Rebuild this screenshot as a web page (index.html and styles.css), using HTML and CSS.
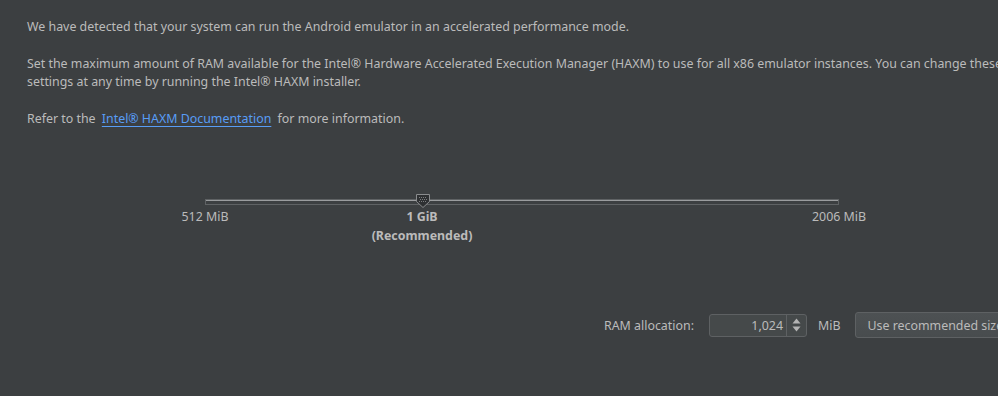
FILE: index.html
```html
<!DOCTYPE html>
<html>
<head>
<meta charset="utf-8">
<link rel="stylesheet" href="styles.css">
</head>
<body>
<div class="page">
  <div class="text">
    <p>We have detected that your system can run the Android emulator in an accelerated performance mode.</p>
    <p>Set the maximum amount of RAM available for the Intel® Hardware Accelerated Execution Manager (HAXM) to use for all x86 emulator instances. You can change these<br>settings at any time by running the Intel® HAXM installer.</p>
    <p>Refer to the <a class="link" href="#">Intel® HAXM Documentation</a> for more information.</p>
  </div>
  <div class="slider">
    <div class="track"></div>
    <div class="thumb">
      <svg width="14" height="14" viewBox="0 0 14 14">
        <path d="M0.5 0.5 H13.5 V7.5 L7 13.5 L0.5 7.5 Z" fill="#2e3032" stroke="#8a8c8e" stroke-width="1"/>
        <g fill="#7a7c7e">
          <rect x="3" y="3" width="1" height="1"/><rect x="5" y="3" width="1" height="1"/><rect x="7" y="3" width="1" height="1"/><rect x="9" y="3" width="1" height="1"/>
          <rect x="4" y="5" width="1" height="1"/><rect x="6" y="5" width="1" height="1"/><rect x="8" y="5" width="1" height="1"/><rect x="10" y="5" width="1" height="1"/>
          <rect x="3" y="7" width="1" height="1"/><rect x="5" y="7" width="1" height="1"/><rect x="7" y="7" width="1" height="1"/><rect x="9" y="7" width="1" height="1"/>
        </g>
      </svg>
    </div>
    <span class="tick tick-min">512 MiB</span>
    <span class="tick tick-rec">1 GiB<br>(Recommended)</span>
    <span class="tick tick-max">2006 MiB</span>
  </div>
  <div class="alloc">
    <span class="alloc-label">RAM allocation:</span>
    <div class="spinner">
      <span class="spinner-value">1,024</span>
      <span class="spinner-arrows">
        <svg width="11" height="18" viewBox="0 0 11 18">
          <path d="M1.5 7.5 L5.5 2.5 L9.5 7.5 Z" fill="#b4b4b4"/>
          <path d="M1.5 10.5 L5.5 15.5 L9.5 10.5 Z" fill="#b4b4b4"/>
        </svg>
      </span>
    </div>
    <span class="unit">MiB</span>
    <button class="btn">Use recommended size</button>
  </div>
</div>
</body>
</html>
```
FILE: styles.css
```css
html, body {
  margin: 0;
  padding: 0;
  background: #3c3f41;
  overflow: hidden;
}
.page {
  width: 998px;
  height: 396px;
  font-family: "Noto Sans", "Open Sans", sans-serif;
  font-size: 12.4px;
  color: #bbbbbb;
  white-space: nowrap;
}
.text {
  padding: 18px 0 0 27px;
}
.text p {
  margin: 0 0 19px 0;
  line-height: 18px;
}
.link {
  color: #589df6;
  text-decoration: underline;
  text-underline-offset: 3px;
  margin: 0 3px;
}
.slider {
  position: relative;
  margin: 69px 0 0 205px;
  width: 634px;
  height: 60px;
}
.track {
  position: absolute;
  left: 0;
  top: 2px;
  width: 632px;
  height: 4px;
  border: 1px solid #5f6264;
  background: #3c3f41;
  box-shadow: inset 0 1px 0 #9a9c9e;
}
.thumb {
  position: absolute;
  left: 211px;
  top: -3px;
  width: 14px;
  height: 14px;
}
.thumb svg { display: block; }
.tick {
  position: absolute;
  top: 10px;
  transform: translateX(-50%);
  line-height: 19px;
  text-align: center;
}
.tick-min { left: 0; }
.tick-max { left: 634px; }
.tick-rec { left: 217px; font-weight: bold; }
.alloc {
  display: flex;
  align-items: center;
  margin: 55px 0 0 604px;
  height: 26px;
}
.alloc > * { flex-shrink: 0; }
.alloc-label {
  margin-right: 15px;
}
.spinner {
  display: flex;
  align-items: stretch;
  width: 96px;
  height: 21px;
  border: 1px solid #5e6163;
  border-radius: 3px;
  background: #45494a;
}
.spinner-value {
  flex: 1;
  text-align: right;
  padding-right: 3px;
  line-height: 21px;
}
.spinner-arrows {
  width: 19px;
  border-left: 1px solid #5e6163;
  display: flex;
  align-items: center;
  justify-content: center;
}
.spinner-arrows svg { display: block; }
.unit {
  margin-left: 11px;
  margin-right: 15px;
}
.btn {
  font-family: inherit;
  font-size: 12.4px;
  color: #bbbbbb;
  background: linear-gradient(#4d5153, #484c4e);
  border: 1px solid #5e6163;
  border-radius: 3px;
  height: 26px;
  padding: 0 11px;
}
```
